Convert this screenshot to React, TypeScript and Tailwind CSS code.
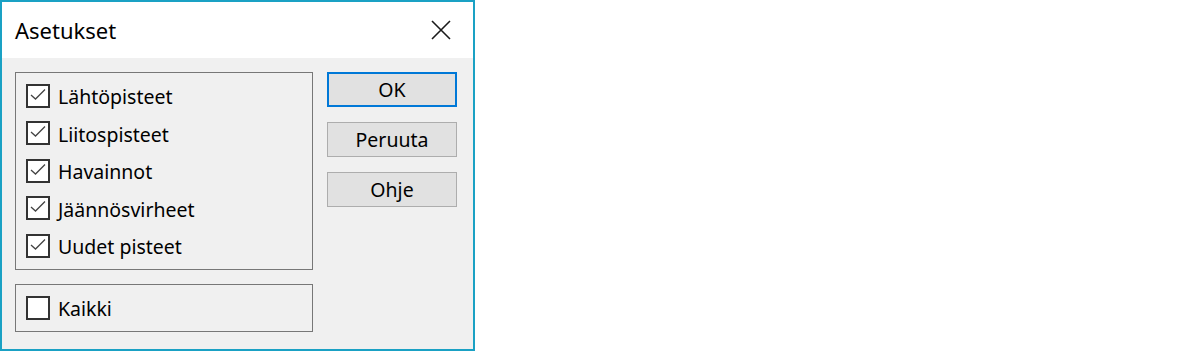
import React from 'react';

const OPTIONS = ['Lähtöpisteet', 'Liitospisteet', 'Havainnot', 'Jäännösvirheet', 'Uudet pisteet'];

function CheckBox({ checked, label }: { checked: boolean; label: string }) {
  return (
    <div className="flex items-center h-[37.5px]">
      <div className="w-[24px] h-[24px] border-2 border-[#333333] bg-white shrink-0">
        {checked && (
          <svg width="20" height="20" viewBox="0 0 20 20" fill="none">
            <path d="M3 9L7.5 13L17 3.5" stroke="#444444" strokeWidth="1.3" />
          </svg>
        )}
      </div>
      <span className="ml-[8px] pt-[2px] text-[19.5px] text-black leading-none">{label}</span>
    </div>
  );
}

function DlgButton({ label, primary }: { label: string; primary?: boolean }) {
  return (
    <button
      className={`w-[130px] h-[35px] bg-[#e1e1e1] text-[19.5px] text-black leading-none ${
        primary ? 'border-2 border-[#0078d7]' : 'border border-[#adadad]'
      }`}
    >
      {label}
    </button>
  );
}

export default function App() {
  return (
    <div className="w-[1200px] h-[351px] bg-white" style={{ fontFamily: '"Noto Sans", "Open Sans", sans-serif' }}>
      <div className="w-[475px] h-[351px] border-2 border-[#1aa1c4] flex flex-col">
        {/* Title bar */}
        <div className="h-[56px] bg-white flex items-center justify-between pl-[13px] pr-[22px] shrink-0">
          <span className="text-[22px] text-black">Asetukset</span>
          <svg width="20" height="20" viewBox="0 0 20 20">
            <path d="M1 1L19 19M19 1L1 19" stroke="#1a1a1a" strokeWidth="1.6" />
          </svg>
        </div>

        {/* Body */}
        <div className="flex-1 bg-[#f0f0f0] flex gap-[14px] pl-[13px] pt-[14px]">
          <div className="flex flex-col gap-[14px] w-[298px]">
            <div className="h-[198px] border border-[#777777] pl-[10px] pt-[4px]">
              {OPTIONS.map(o => (
                <CheckBox key={o} checked label={o} />
              ))}
            </div>
            <div className="h-[48px] border border-[#777777] pl-[10px] flex items-center">
              <CheckBox checked={false} label="Kaikki" />
            </div>
          </div>

          <div className="flex flex-col gap-[15px]">
            <DlgButton label="OK" primary />
            <DlgButton label="Peruuta" />
            <DlgButton label="Ohje" />
          </div>
        </div>
      </div>
    </div>
  );
}
